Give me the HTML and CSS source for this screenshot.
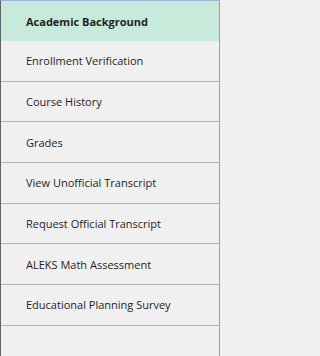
FILE: index.html
```html
<!DOCTYPE html>
<html>
<head>
<meta charset="utf-8">
<link rel="stylesheet" href="styles.css">
</head>
<body>
<nav class="menu">
  <a class="item active">Academic Background</a>
  <a class="item">Enrollment Verification</a>
  <a class="item">Course History</a>
  <a class="item">Grades</a>
  <a class="item">View Unofficial Transcript</a>
  <a class="item">Request Official Transcript</a>
  <a class="item">ALEKS Math Assessment</a>
  <a class="item">Educational Planning Survey</a>
</nav>
</body>
</html>
```
FILE: styles.css
```css
html, body {
  margin: 0;
  padding: 0;
  background: #f0f0f0;
}
.menu {
  width: 220px;
  height: 356px;
  box-sizing: border-box;
  border-top: 1px solid #9cb5dc;
  border-left: 1px solid #5d626c;
  border-right: 1px solid #a0a0a0;
  background: #f0f0f0;
  display: flex;
  flex-direction: column;
  font-family: "Open Sans", "Liberation Sans", sans-serif;
  font-size: 11px;
  color: #1e1e1e;
}
.item {
  display: flex;
  align-items: center;
  height: 40.67px;
  box-sizing: border-box;
  padding-left: 25px;
  border-bottom: 1px solid #b4b4b4;
  flex-shrink: 0;
}
.item.active {
  height: 40px;
  background: #c8eada;
  border-bottom: none;
  font-weight: bold;
}
```
